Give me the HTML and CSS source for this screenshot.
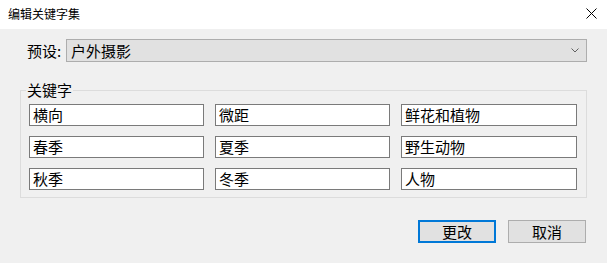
FILE: index.html
```html
<!DOCTYPE html>
<html lang="zh-CN">
<head>
<meta charset="utf-8">
<title>编辑关键字集</title>
<link rel="stylesheet" href="styles.css">
</head>
<body>
<div class="dialog">
  <div class="titlebar">
    <span class="title">编辑关键字集</span>
    <svg class="close" width="11" height="11" viewBox="0 0 11 11"><path d="M0.5 0.5 L10.5 10.5 M10.5 0.5 L0.5 10.5" stroke="#000" stroke-width="1" fill="none"/></svg>
  </div>
  <div class="content">
    <div class="preset-row">
      <span class="preset-label">预设:</span>
      <div class="combo">
        <span class="combo-text">户外摄影</span>
        <svg class="chevron" width="8" height="5" viewBox="0 0 8 5"><path d="M0.5 0.5 L4 4 L7.5 0.5" stroke="#606060" stroke-width="1" fill="none"/></svg>
      </div>
    </div>
    <fieldset class="group">
      <legend class="group-label">关键字</legend>
      <div class="grid">
        <div class="field">横向</div>
        <div class="field">微距</div>
        <div class="field">鲜花和植物</div>
        <div class="field">春季</div>
        <div class="field">夏季</div>
        <div class="field">野生动物</div>
        <div class="field">秋季</div>
        <div class="field">冬季</div>
        <div class="field">人物</div>
      </div>
    </fieldset>
    <div class="buttons">
      <div class="btn btn-default">更改</div>
      <div class="btn">取消</div>
    </div>
  </div>
</div>
</body>
</html>
```

FILE: styles.css
```css
* { box-sizing: border-box; }
html, body {
  margin: 0;
  padding: 0;
  background: #f0f0f0;
  font-family: "Noto Sans CJK SC", "Noto Sans", sans-serif;
  color: #000;
}
.dialog {
  width: 607px;
  height: 263px;
  display: flex;
  flex-direction: column;
}
.titlebar {
  height: 29px;
  background: #fff;
  display: flex;
  align-items: center;
  justify-content: space-between;
  padding: 0 10px 1px 8px;
}
.title {
  font-size: 12px;
  line-height: 14px;
}
.close {
  display: block;
  margin-bottom: 1px;
}
.content {
  padding: 10px 20px 0 20px;
  display: flex;
  flex-direction: column;
}
.preset-row {
  display: flex;
  align-items: center;
  height: 23px;
  padding-left: 7px;
}
.preset-label {
  font-size: 15px;
  line-height: 18px;
  width: 39px;
}
.combo {
  flex: 1;
  height: 23px;
  background: #e1e1e1;
  border: 1px solid #adadad;
  display: flex;
  align-items: center;
  justify-content: space-between;
  padding: 0 7px 0 4px;
}
.combo-text {
  font-size: 15px;
  line-height: 18px;
}
.chevron { display: block; }
.group {
  margin: 19px 0 0 0;
  border: 1px solid #dcdcdc;
  padding: 5px 9px 7px 8px;
  min-width: 0;
}
.group-label {
  font-size: 15px;
  line-height: 18px;
  padding: 0 1px;
  margin-left: -3px;
}
.grid {
  display: grid;
  grid-template-columns: 175px 175px 176px;
  grid-auto-rows: 22px;
  column-gap: 11px;
  row-gap: 10px;
}
.field {
  background: #fff;
  border: 1px solid #7a7a7a;
  font-size: 15px;
  line-height: 18px;
  padding: 1px 3px;
  white-space: nowrap;
}
.buttons {
  display: flex;
  justify-content: flex-end;
  gap: 12px;
  margin-top: 22px;
  padding-right: 1px;
}
.btn {
  width: 78px;
  height: 23px;
  background: #e1e1e1;
  border: 1px solid #adadad;
  font-size: 15px;
  line-height: 18px;
  display: flex;
  align-items: center;
  justify-content: center;
}
.btn-default {
  border: 2px solid #0078d7;
}
```
